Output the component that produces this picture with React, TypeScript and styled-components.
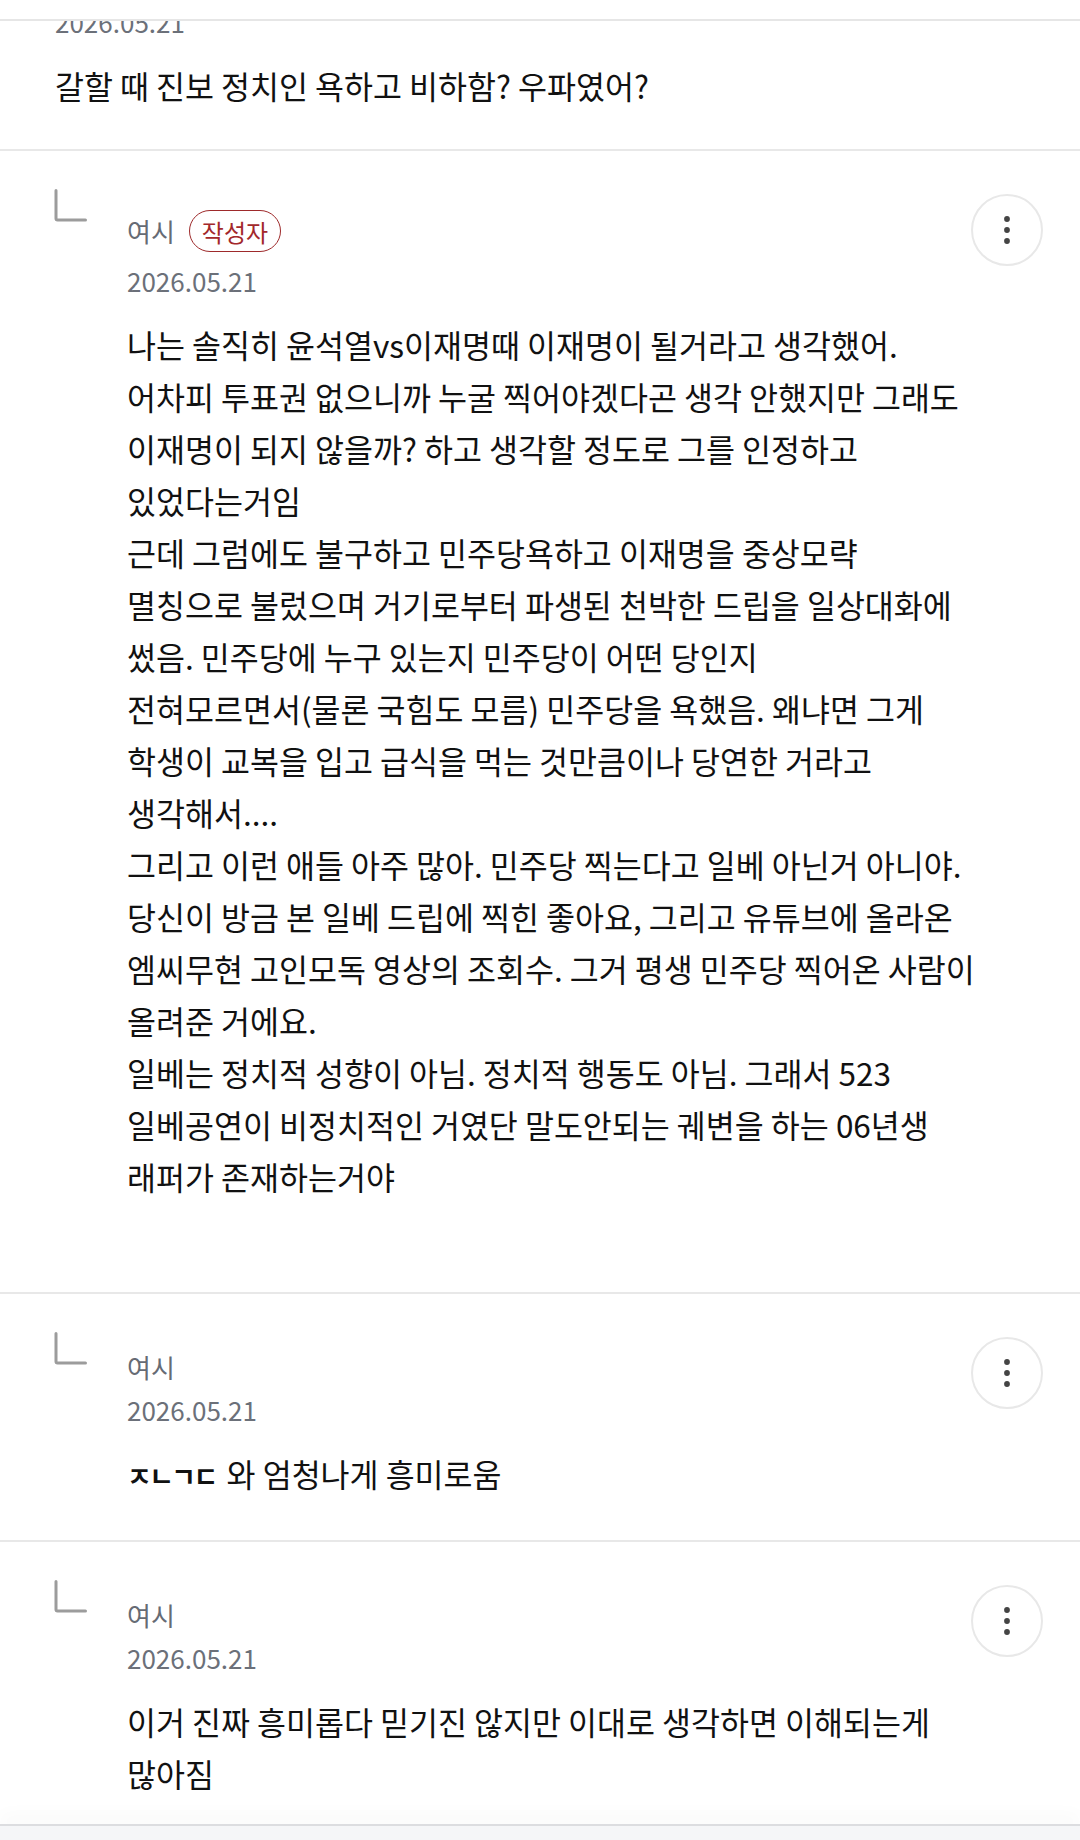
import React, { FC } from "react";
import styled, { createGlobalStyle } from "styled-components";

const GlobalStyle = createGlobalStyle`
  html, body {
    margin: 0;
    padding: 0;
    background: #ffffff;
  }
  body {
    font-family: "Noto Sans CJK KR", "Noto Sans", sans-serif;
    -webkit-font-smoothing: antialiased;
  }
`;

// small bold jamo run, as the phone font renders it
const Jamo = styled.span`
  font-size: 27px;
  font-weight: 700;
  letter-spacing: -0.1em;
  margin-right: 4px;
`;

interface IComment {
  id: number;
  reply: boolean;
  author: string;
  isWriter?: boolean;
  date: string;
  lines: React.ReactNode[];
}

const comments: IComment[] = [
  {
    id: 1,
    reply: false,
    author: "여시",
    date: "2026.05.21",
    lines: ["갈할 때 진보 정치인 욕하고 비하함? 우파였어?"],
  },
  {
    id: 2,
    reply: true,
    author: "여시",
    isWriter: true,
    date: "2026.05.21",
    lines: [
      "나는 솔직히 윤석열vs이재명때 이재명이 될거라고 생각했어.",
      "어차피 투표권 없으니까 누굴 찍어야겠다곤 생각 안했지만 그래도",
      "이재명이 되지 않을까? 하고 생각할 정도로 그를 인정하고",
      "있었다는거임",
      "근데 그럼에도 불구하고 민주당욕하고 이재명을 중상모략",
      "멸칭으로 불렀으며 거기로부터 파생된 천박한 드립을 일상대화에",
      "썼음. 민주당에 누구 있는지 민주당이 어떤 당인지",
      "전혀모르면서(물론 국힘도 모름) 민주당을 욕했음. 왜냐면 그게",
      "학생이 교복을 입고 급식을 먹는 것만큼이나 당연한 거라고",
      "생각해서....",
      "그리고 이런 애들 아주 많아. 민주당 찍는다고 일베 아닌거 아니야.",
      "당신이 방금 본 일베 드립에 찍힌 좋아요, 그리고 유튜브에 올라온",
      "엠씨무현 고인모독 영상의 조회수. 그거 평생 민주당 찍어온 사람이",
      "올려준 거에요.",
      "일베는 정치적 성향이 아님. 정치적 행동도 아님. 그래서 523",
      "일베공연이 비정치적인 거였단 말도안되는 궤변을 하는 06년생",
      "래퍼가 존재하는거야",
      "",
    ],
  },
  {
    id: 3,
    reply: true,
    author: "여시",
    date: "2026.05.21",
    lines: [
      <>
        <Jamo>ㅈㄴㄱㄷ</Jamo> 와 엄청나게 흥미로움
      </>,
    ],
  },
  {
    id: 4,
    reply: true,
    author: "여시",
    date: "2026.05.21",
    lines: [
      "이거 진짜 흥미롭다 믿기진 않지만 이대로 생각하면 이해되는게",
      "많아짐",
    ],
  },
];

const ReplyIcon: FC = () => (
  <svg width="33" height="33" viewBox="0 0 33 33" fill="none">
    <path
      d="M2 1.5 V29.5 Q2 31 3.5 31 H31.5"
      stroke="#9c9c9c"
      strokeWidth="3"
      strokeLinecap="round"
    />
  </svg>
);

const DotsIcon: FC = () => (
  <svg width="8" height="30" viewBox="0 0 8 30">
    <circle cx="4" cy="4" r="2.9" fill="#444" />
    <circle cx="4" cy="15" r="2.9" fill="#444" />
    <circle cx="4" cy="26" r="2.9" fill="#444" />
  </svg>
);

const Comment: FC<{ comment: IComment }> = ({ comment }) => (
  <Item $reply={comment.reply}>
    {comment.reply && (
      <ReplyMark>
        <ReplyIcon />
      </ReplyMark>
    )}
    <Content>
      <Header>
        <Meta>
          <NameRow>
            <Name>{comment.author}</Name>
            {comment.isWriter && <WriterBadge>작성자</WriterBadge>}
          </NameRow>
          <DateText>{comment.date}</DateText>
        </Meta>
        <MenuButton aria-label="더보기">
          <DotsIcon />
        </MenuButton>
      </Header>
      <Body>
        {comment.lines.map((line, i) => (
          <Line key={i}>{line || "\u00a0"}</Line>
        ))}
      </Body>
    </Content>
  </Item>
);

const App: FC = () => (
  <>
    <GlobalStyle />
    <Screen>
      <TopBar />
      <Feed>
        <List>
          {comments.map((c) => (
            <Comment key={c.id} comment={c} />
          ))}
        </List>
      </Feed>
      <BottomBar />
    </Screen>
  </>
);

export default App;

const Screen = styled.div`
  width: 1080px;
  height: 1840px;
  display: flex;
  flex-direction: column;
  overflow: hidden;
  background: #fff;
`;

const TopBar = styled.div`
  height: 19px;
  flex-shrink: 0;
  background: #fff;
  border-bottom: 2px solid #e6e6e6;
`;

const Feed = styled.div`
  flex: 1;
  overflow: hidden;
  position: relative;
`;

const List = styled.div`
  margin-top: -115px;
  display: flex;
  flex-direction: column;
`;

const Item = styled.div<{ $reply: boolean }>`
  display: flex;
  align-items: flex-start;
  padding: 38px 37px 38px ${(p) => (p.$reply ? "54px" : "55px")};
  border-bottom: 2px solid #e8e8e8;
`;

const ReplyMark = styled.div`
  width: 33px;
  height: 33px;
  margin-right: 40px;
  flex-shrink: 0;
`;

const Content = styled.div`
  flex: 1;
  min-width: 0;
  padding-top: 5px;
`;

const Header = styled.div`
  display: flex;
  justify-content: space-between;
  align-items: flex-start;
`;

const Meta = styled.div`
  display: flex;
  flex-direction: column;
  padding-top: 16px;
`;

const NameRow = styled.div`
  display: flex;
  align-items: center;
  min-height: 28px;
`;

const Name = styled.span`
  font-size: 26px;
  line-height: 28px;
  color: #666b74;
`;

const WriterBadge = styled.span`
  display: inline-flex;
  align-items: center;
  height: 42px;
  box-sizing: border-box;
  margin-left: 14px;
  padding: 0 12px;
  border: 1.5px solid #9e2a2b;
  border-radius: 21px;
  font-size: 24px;
  color: #a3282b;
`;

const DateText = styled.span`
  margin-top: 14px;
  font-size: 26px;
  line-height: 30px;
  color: #6b7079;
`;

const MenuButton = styled.button`
  width: 72px;
  height: 72px;
  flex-shrink: 0;
  display: flex;
  align-items: center;
  justify-content: center;
  padding: 0;
  border: 2px solid #e8e8e8;
  border-radius: 50%;
  background: #fff;
`;

const Body = styled.div`
  margin-top: 22px;
  font-size: 31.5px;
  line-height: 52px;
  color: #111;
`;

const Line = styled.div`
  white-space: nowrap;
  min-height: 52px;
`;

const BottomBar = styled.div`
  height: 14px;
  flex-shrink: 0;
  background: #f5f6f8;
  border-top: 2px solid #dcdde0;
  box-shadow: 0 -10px 18px rgba(0, 0, 0, 0.025);
  position: relative;
  z-index: 1;
`;
